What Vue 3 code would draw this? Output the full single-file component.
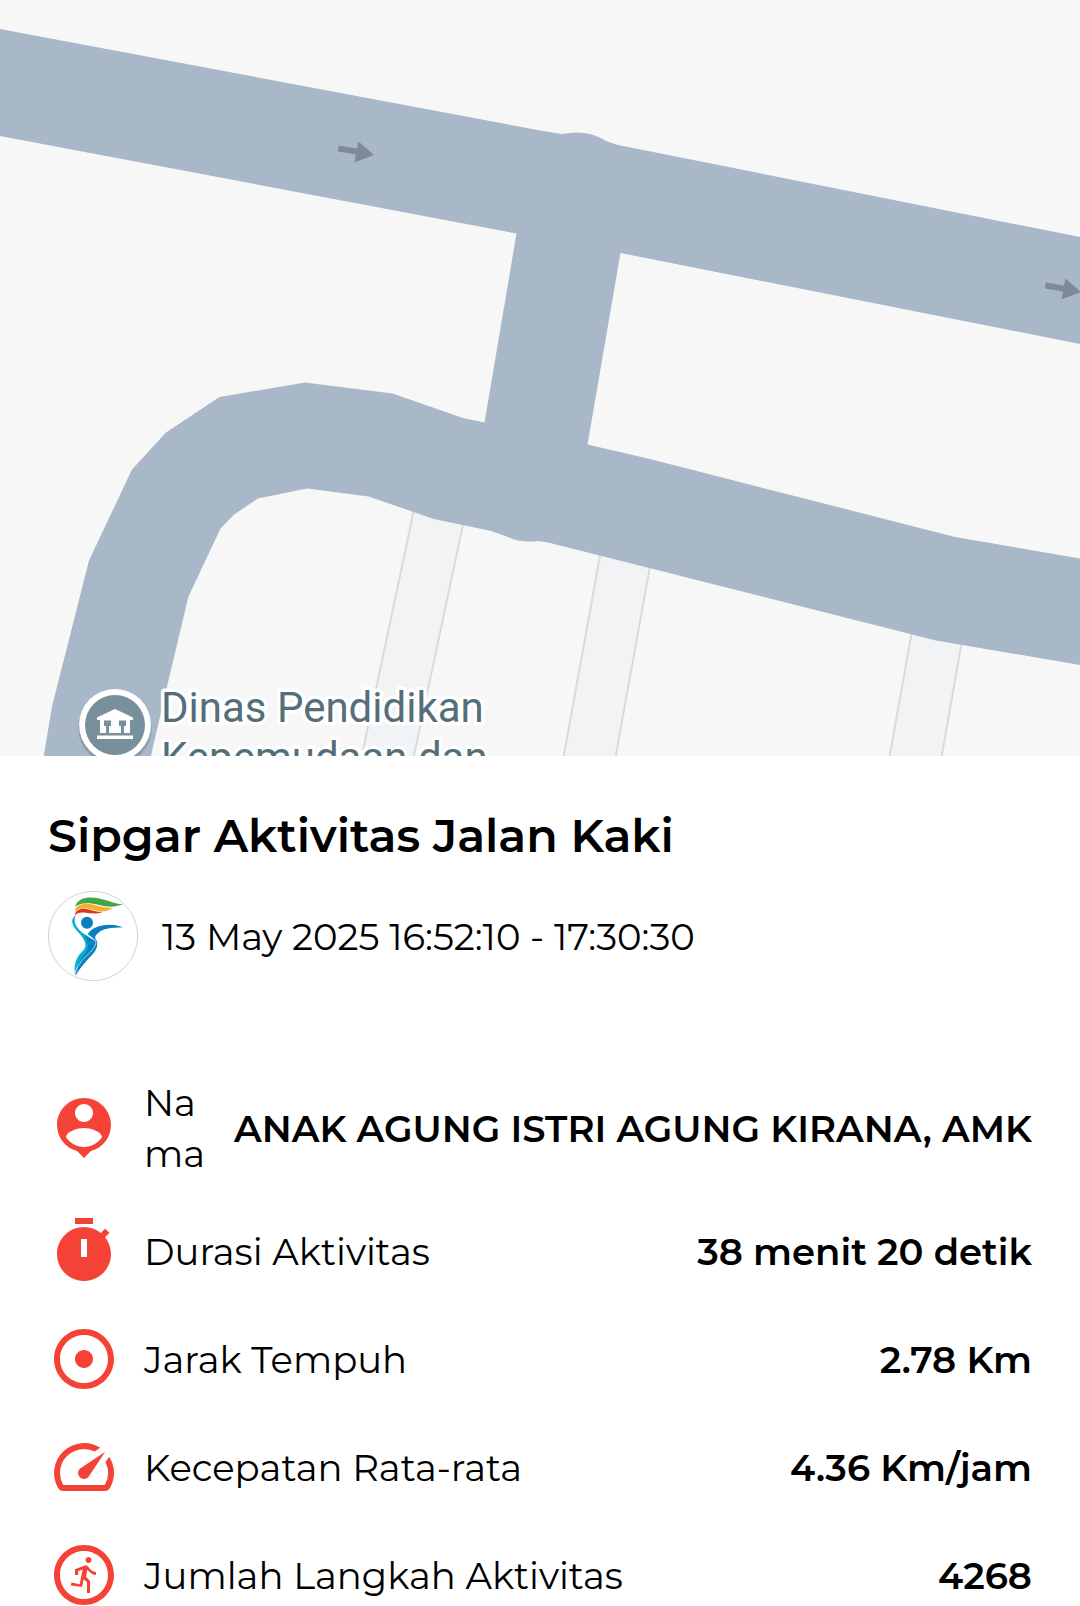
<template>
  <main class="activity">
    <!-- Route map -->
    <svg class="map" viewBox="0 0 1080 756" role="img" aria-label="Peta aktivitas">
      <rect width="1080" height="756" fill="#f7f7f7" />

      <!-- small lanes -->
      <g fill="#f1f3f5">
        <path d="M413 505L360 760H413L463 515Z" />
        <path d="M600 545L563 760H615L650 555Z" />
        <path d="M912 625L889 760H941L962 635Z" />
      </g>
      <g fill="none" stroke="#d9dade" stroke-width="2">
        <path d="M415 505L361 760M465 515L413 760" />
        <path d="M602 545L563 760M652 555L615 760" />
        <path d="M913 625L889 760M963 635L941 760" />
      </g>

      <!-- roads -->
      <g fill="#a9b8c9">
        <path d="M0 29L540 130.500L562 134Q578 131 590 134Q600 137 606 141L618 145L1080 237V344L620.500 253L587.500 444.500L650 459L955 537L1080 558.500V665L936 640.500L548 542.500L538 541Q520 543 508 537L491 531L434 519L368.500 496.500L307 488.500L258 498.500L234 514.500L220.500 528.500L188.500 596.500L169 678L150 760H43L52 706.500L89 560.500L132 469.500L166 432.500L219.500 397L305 382.500L392.500 393.500L463 418L484.500 422.500L516.500 233.500L0 136Z" />
      </g>
      <g fill="#808a97">
        <path v-for="(a, i) in arrows" :key="i" :transform="`translate(${a.x} ${a.y})`" d="M.5 0L19 3L20.500 -4L36 9.500L16.500 17L18 9L0 6Z" />
      </g>

      <!-- place marker -->
      <circle cx="115" cy="728" r="37" fill="#5d6e80" opacity=".25" />
      <circle cx="115" cy="727" r="36" fill="#5d6e80" opacity=".4" />
      <circle cx="115" cy="725" r="36" fill="#fff" />
      <circle cx="115" cy="725" r="30" fill="#78909c" />
      <path fill="#fff" d="M115 709L133 717.500V720H130V733H100V720H97V717.500ZM97 735.500H133V739H97Z" />
      <path fill="#78909c" d="M104 720.500H111V726H109V733H106V726H104ZM119 720.500H126V726H124V733H121V726H119Z" />

      <g class="place">
        <text x="161" y="722">Dinas Pendidikan</text>
        <text x="161" y="772">Kepemudaan dan</text>
      </g>
    </svg>

    <section class="detail">
      <h1>Sipgar Aktivitas Jalan Kaki</h1>
      <div class="when">
        <svg class="logo" viewBox="24 33 270 270" aria-hidden="true">
          <circle cx="159" cy="168" r="134" fill="#fff" stroke="#bbb" stroke-width="2" />
          <path fill="#43a547" d="M105 80C116 50 149 49 181 56C206 61 222 71 249 73C223 83 201 81 178 75C148 67 122 67 105 80Z" />
          <path fill="#f6b02c" d="M104 95C106 72 136 67 164 75C184 80 201 85 219 83C199 98 179 95 160 90C137 83 116 83 104 95Z" />
          <path fill="#dc3328" d="M104 109C106 87 125 83 148 89C163 93 175 96 188 95C171 103 154 101 138 98C121 96 109 98 104 109Z" />
          <circle cx="141" cy="128" r="18" fill="#087fc1" />
          <path fill="#00b4d1" d="M107 107C97 128 112 149 139 166L167 184C164 201 146 218 130 235C113 252 106 267 105 284C100 247 112 229 130 211C144 196 133 176 116 158C90 131 93 114 107 107Z" />
          <path fill="#087fc1" d="M143 162C160 137 203 126 250 142C211 143 187 145 169 164C163 171 166 177 171 184C176 209 157 224 140 242C125 258 115 273 106 288C107 261 118 243 131 226C143 212 146 199 142 187Q138 176 132 166L167 184L154 171Z" />
          <path fill="none" stroke="#fff" stroke-width="2" d="M130 158Q166 176 168 187C164 210 141 224 126 241Q112 257 106 279" />
        </svg>
        <time datetime="2025-05-13T16:52:10">13 May 2025 16:52:10 - 17:30:30</time>
      </div>

      <dl class="stats">
        <div v-for="s in stats" :key="s.label" class="row">
          <svg class="icon" viewBox="0 0 24 24" aria-hidden="true"><path :d="s.icon" /></svg>
          <dt :class="{ narrow: s.narrow }">{{ s.label }}</dt>
          <dd>{{ s.value }}</dd>
        </div>
      </dl>
    </section>
  </main>
</template>

<script setup>
const arrows = [
  { x: 338, y: 145.5 },
  { x: 1045, y: 282.5 }
];

const stats = [
  {
    label: 'Nama',
    value: 'ANAK AGUNG ISTRI AGUNG KIRANA, AMK',
    narrow: true,
    icon: 'M12 2c-4.970 0-9 4.030-9 9 0 4.170 2.840 7.670 6.690 8.690L12 22l2.310-2.310C18.160 18.670 21 15.170 21 11c0-4.970-4.030-9-9-9zm0 2c1.660 0 3 1.340 3 3s-1.340 3-3 3-3-1.340-3-3 1.340-3 3-3zm0 14.300c-2.500 0-4.710-1.280-6-3.220.030-1.990 4-3.080 6-3.080 1.990 0 5.970 1.090 6 3.080-1.290 1.940-3.500 3.220-6 3.220z'
  },
  {
    label: 'Durasi Aktivitas',
    value: '38 menit 20 detik',
    icon: 'M9 1h6v2H9zM19.030 7.390l1.420-1.420c-.430-.510-.900-.990-1.410-1.410l-1.420 1.420C16.070 4.740 14.120 4 12 4c-4.970 0-9 4.030-9 9s4.020 9 9 9 9-4.030 9-9c0-2.120-.740-4.070-1.970-5.610zM13 14h-2V8h2v6z'
  },
  {
    label: 'Jarak Tempuh',
    value: '2.78 Km',
    icon: 'M12 2C6.480 2 2 6.480 2 12s4.480 10 10 10 10-4.480 10-10S17.520 2 12 2zm0 18c-4.420 0-8-3.580-8-8s3.580-8 8-8 8 3.580 8 8-3.580 8-8 8zm3-8c0 1.660-1.340 3-3 3s-3-1.340-3-3 1.340-3 3-3 3 1.340 3 3z'
  },
  {
    label: 'Kecepatan Rata-rata',
    value: '4.36 Km/jam',
    icon: 'M20.380 8.570l-1.230 1.850a8 8 0 0 1-.220 7.580H5.070A8 8 0 0 1 15.580 6.850l1.850-1.230A10 10 0 0 0 3.350 19a2 2 0 0 0 1.720 1h13.850a2 2 0 0 0 1.740-1 10 10 0 0 0-.270-10.440zm-9.790 6.840a2 2 0 0 0 2.830 0l5.660-8.490-8.490 5.660a2 2 0 0 0 0 2.830z'
  },
  {
    label: 'Jumlah Langkah Aktivitas',
    value: '4268',
    icon: 'M12 2C6.480 2 2 6.480 2 12s4.480 10 10 10 10-4.480 10-10S17.520 2 12 2zm0 18c-4.420 0-8-3.580-8-8s3.580-8 8-8 8 3.580 8 8-3.580 8-8 8zM13.500 6c.550 0 1 .450 1 1s-.450 1-1 1-1-.450-1-1 .450-1 1-1zm2.500 6c-.700 0-2.010-.540-2.910-1.760l-.410 2.350L14 14.030V18h-1v-3.580l-1.110-1.040-.520 2.640L7.600 15.500l.200-.990 2.780.570.960-4.890-1.540.570V12H9v-1.930l3.280-1.210c.490-.180 1.030.060 1.260.530C14.370 10.670 15.590 11 16 11v1z'
  }
];
</script>

<style>
body {
  margin: 0;
  background: #fff;
}
</style>

<style scoped>
.activity {
  height: 100vh;
  overflow: hidden;
  font-family: Montserrat, Inter, sans-serif;
  color: #000;
}

.map {
  display: block;
  width: 100%;
  height: auto;
}

.place {
  font-family: Roboto, sans-serif;
  font-size: 42px;
  fill: #546e7a;
  stroke: #fff;
  stroke-width: 7px;
  stroke-linejoin: round;
  paint-order: stroke;
}

.detail {
  padding: 48px;
}

h1 {
  margin: 0 0 23px;
  font-size: 46px;
  line-height: 64px;
  font-weight: 600;
}

.when {
  display: flex;
  align-items: center;
  gap: 24px;
  font-size: 37px;
  font-weight: 400;
}

.logo {
  flex: none;
  width: 90px;
  height: 90px;
}

.stats {
  display: flex;
  flex-direction: column;
  gap: 36px;
  margin: 96px 0 0;
}

.row {
  display: flex;
  align-items: center;
  gap: 24px;
  font-size: 37px;
  line-height: 51px;
}

.icon {
  flex: none;
  width: 72px;
  height: 72px;
  fill: #f44336;
}

dt {
  font-weight: 400;
  overflow-wrap: anywhere;
}

dt.narrow {
  width: 62px;
}

dd {
  margin: 0 0 0 auto;
  font-weight: 600;
  text-align: right;
  white-space: nowrap;
}
</style>
